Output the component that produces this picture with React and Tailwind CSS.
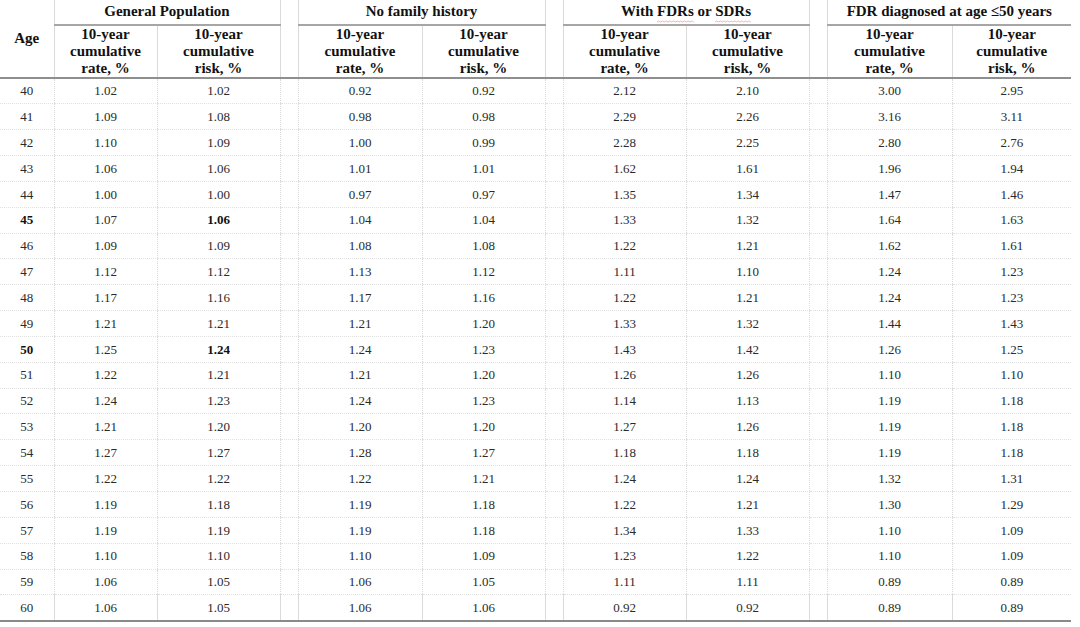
import React from "react";

const rows = [
  [40, "1.02", "1.02", "0.92", "0.92", "2.12", "2.10", "3.00", "2.95"],
  [41, "1.09", "1.08", "0.98", "0.98", "2.29", "2.26", "3.16", "3.11"],
  [42, "1.10", "1.09", "1.00", "0.99", "2.28", "2.25", "2.80", "2.76"],
  [43, "1.06", "1.06", "1.01", "1.01", "1.62", "1.61", "1.96", "1.94"],
  [44, "1.00", "1.00", "0.97", "0.97", "1.35", "1.34", "1.47", "1.46"],
  [45, "1.07", "1.06", "1.04", "1.04", "1.33", "1.32", "1.64", "1.63"],
  [46, "1.09", "1.09", "1.08", "1.08", "1.22", "1.21", "1.62", "1.61"],
  [47, "1.12", "1.12", "1.13", "1.12", "1.11", "1.10", "1.24", "1.23"],
  [48, "1.17", "1.16", "1.17", "1.16", "1.22", "1.21", "1.24", "1.23"],
  [49, "1.21", "1.21", "1.21", "1.20", "1.33", "1.32", "1.44", "1.43"],
  [50, "1.25", "1.24", "1.24", "1.23", "1.43", "1.42", "1.26", "1.25"],
  [51, "1.22", "1.21", "1.21", "1.20", "1.26", "1.26", "1.10", "1.10"],
  [52, "1.24", "1.23", "1.24", "1.23", "1.14", "1.13", "1.19", "1.18"],
  [53, "1.21", "1.20", "1.20", "1.20", "1.27", "1.26", "1.19", "1.18"],
  [54, "1.27", "1.27", "1.28", "1.27", "1.18", "1.18", "1.19", "1.18"],
  [55, "1.22", "1.22", "1.22", "1.21", "1.24", "1.24", "1.32", "1.31"],
  [56, "1.19", "1.18", "1.19", "1.18", "1.22", "1.21", "1.30", "1.29"],
  [57, "1.19", "1.19", "1.19", "1.18", "1.34", "1.33", "1.10", "1.09"],
  [58, "1.10", "1.10", "1.10", "1.09", "1.23", "1.22", "1.10", "1.09"],
  [59, "1.06", "1.05", "1.06", "1.05", "1.11", "1.11", "0.89", "0.89"],
  [60, "1.06", "1.05", "1.06", "1.06", "0.92", "0.92", "0.89", "0.89"],
];

const V = "border-l border-dotted border-l-[#dadada]";
const H = "border-b border-dotted border-b-[#e0e0e0]";

function SubHead({ kind }) {
  return (
    <th
      className={`${V} border-b-2 border-solid border-b-[#8f8f8f] p-0 text-center align-middle font-bold text-[15px] leading-[17px] text-[#111]`}
    >
      10-year
      <br />
      cumulative
      <br />
      {kind}, %
    </th>
  );
}

function Group({ children }) {
  return (
    <th
      colSpan={2}
      className={`${V} border-b-2 border-solid border-b-[#a6a6a6] p-0 pb-[1px] text-center align-middle font-bold text-[15px] leading-[17px] text-[#111]`}
    >
      {children}
    </th>
  );
}

function Spacer() {
  return (
    <th
      rowSpan={2}
      className={`${V} border-b-2 border-solid border-b-[#8f8f8f] p-0`}
    ></th>
  );
}

function Squiggle({ children }) {
  return (
    <span className="relative inline-block">
      {children}
      <svg
        className="absolute left-0 bottom-[-3px] w-full h-[3px]"
        viewBox="0 0 40 3"
        preserveAspectRatio="none"
      >
        <path
          d="M0 2 L2 1 L4 2 L6 1 L8 2 L10 1 L12 2 L14 1 L16 2 L18 1 L20 2 L22 1 L24 2 L26 1 L28 2 L30 1 L32 2 L34 1 L36 2 L38 1 L40 2"
          fill="none"
          stroke="#f0a0a0"
          strokeWidth="0.8"
          vectorEffect="non-scaling-stroke"
        />
      </svg>
    </span>
  );
}

export default function App() {
  return (
    <div
      className="w-[1080px] h-[627px] bg-white overflow-hidden"
      style={{ fontFamily: '"Liberation Serif", "Times New Roman", serif' }}
    >
      <table className="table-fixed border-collapse w-[1071px] text-[#2a2a2a]">
        <colgroup>
          <col className="w-[54px]" />
          <col className="w-[103px]" />
          <col className="w-[123px]" />
          <col className="w-[18px]" />
          <col className="w-[124px]" />
          <col className="w-[123px]" />
          <col className="w-[18px]" />
          <col className="w-[123px]" />
          <col className="w-[123px]" />
          <col className="w-[18px]" />
          <col className="w-[125px]" />
          <col className="w-[119px]" />
        </colgroup>
        <thead>
          <tr className="h-[25px]">
            <th
              rowSpan={2}
              className="border-b-2 border-solid border-b-[#8f8f8f] p-0 text-center align-middle font-bold text-[15px] text-[#111]"
            >
              Age
            </th>
            <Group>General Population</Group>
            <Spacer />
            <Group>No family history</Group>
            <Spacer />
            <Group>
              With <Squiggle>FDRs</Squiggle> or <Squiggle>SDRs</Squiggle>
            </Group>
            <Spacer />
            <Group>FDR diagnosed at age ≤50 years</Group>
          </tr>
          <tr className="h-[53px]">
            <SubHead kind="rate" />
            <SubHead kind="risk" />
            <SubHead kind="rate" />
            <SubHead kind="risk" />
            <SubHead kind="rate" />
            <SubHead kind="risk" />
            <SubHead kind="rate" />
            <SubHead kind="risk" />
          </tr>
        </thead>
        <tbody className="text-[13px]">
          {rows.map((r, i) => {
            const bold = r[0] === 45 || r[0] === 50;
            const last = i === rows.length - 1;
            const hb = last
              ? "border-b-2 border-solid border-b-[#8a8a8a]"
              : H;
            const cell = (v, b) => (
              <td
                className={`${V} ${hb} p-0 text-center align-middle ${b ? "font-bold text-[#111]" : ""}`}
              >
                {v}
              </td>
            );
            const sp = <td className={`${V} ${hb} p-0`}></td>;
            return (
              <tr key={r[0]} className="h-[25.85px]">
                <td
                  className={`${hb} p-0 text-center align-middle ${bold ? "font-bold text-[#111]" : ""}`}
                >
                  {r[0]}
                </td>
                {cell(r[1])}
                {cell(r[2], bold)}
                {sp}
                {cell(r[3])}
                {cell(r[4])}
                {sp}
                {cell(r[5])}
                {cell(r[6])}
                {sp}
                {cell(r[7])}
                {cell(r[8])}
              </tr>
            );
          })}
        </tbody>
      </table>
    </div>
  );
}
